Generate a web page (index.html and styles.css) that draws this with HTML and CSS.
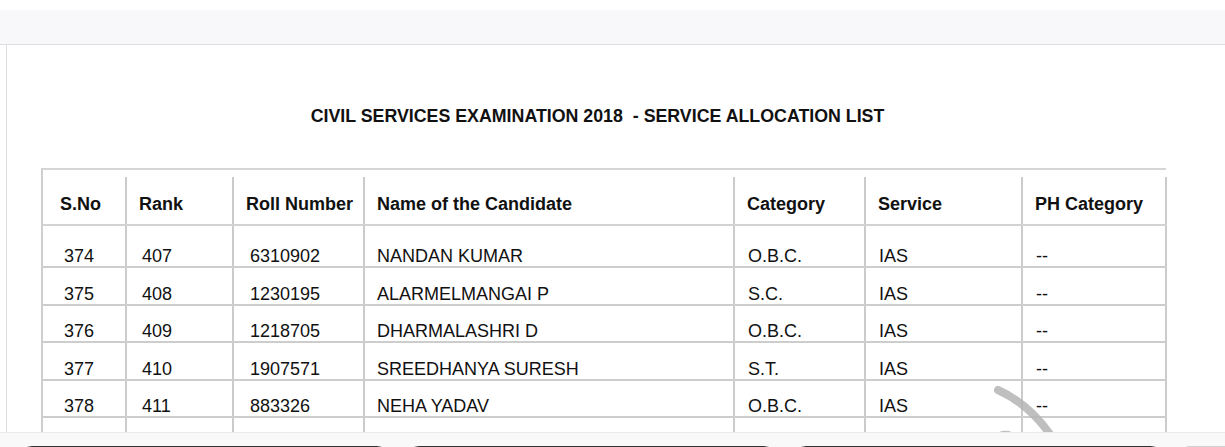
FILE: index.html
```html
<!DOCTYPE html>
<html>
<head>
<meta charset="utf-8">
<link rel="stylesheet" href="styles.css">
</head>
<body>
<div class="topgap"></div>
<div class="band"></div>
<div class="frame">
  <h1 class="title">CIVIL SERVICES EXAMINATION 2018&nbsp; - SERVICE ALLOCATION LIST</h1>
  <div class="tablewrap">
    <table class="list">
      <colgroup>
        <col class="c-sno"><col class="c-rank"><col class="c-roll"><col class="c-name"><col class="c-cat"><col class="c-svc"><col class="c-ph">
      </colgroup>
      <thead>
        <tr><th>S.No</th><th>Rank</th><th>Roll Number</th><th>Name of the Candidate</th><th>Category</th><th>Service</th><th>PH Category</th></tr>
      </thead>
      <tbody>
        <tr class="first"><td>374</td><td>407</td><td>6310902</td><td>NANDAN KUMAR</td><td>O.B.C.</td><td>IAS</td><td>--</td></tr>
        <tr><td>375</td><td>408</td><td>1230195</td><td>ALARMELMANGAI P</td><td>S.C.</td><td>IAS</td><td>--</td></tr>
        <tr><td>376</td><td>409</td><td>1218705</td><td>DHARMALASHRI D</td><td>O.B.C.</td><td>IAS</td><td>--</td></tr>
        <tr><td>377</td><td>410</td><td>1907571</td><td>SREEDHANYA SURESH</td><td>S.T.</td><td>IAS</td><td>--</td></tr>
        <tr><td>378</td><td>411</td><td>883326</td><td>NEHA YADAV</td><td>O.B.C.</td><td>IAS</td><td>--</td></tr>
        <tr class="last"><td></td><td></td><td></td><td></td><td></td><td></td><td></td></tr>
      </tbody>
    </table>
  </div>
  <svg class="watermark" width="90" height="60" viewBox="0 0 90 60">
    <path d="M12 5 Q 45 20 68 55" fill="none" stroke="#b4b4b4" stroke-width="8" stroke-linecap="round" opacity="0.85"/>
    <path d="M8 58 Q 14 48 22 50" fill="none" stroke="#b4b4b4" stroke-width="8" stroke-linecap="round" opacity="0.85"/>
  </svg>
</div>
<div class="footer">
  <div class="card"></div>
  <div class="card"></div>
  <div class="card"></div>
  <div class="card light"></div>
</div>
</body>
</html>
```

FILE: styles.css
```css
html, body {
  margin: 0;
  padding: 0;
  background: #ffffff;
  font-family: "Liberation Sans", Arial, sans-serif;
  color: #111;
  overflow: hidden;
}
.topgap {
  height: 10px;
  background: #ffffff;
}
.band {
  height: 34px;
  background: #f8f8fa;
  border-bottom: 1px solid #dedede;
}
.frame {
  position: relative;
  margin-left: 6px;
  height: 387px;
  border-left: 1px solid #dcdcdc;
  background: #ffffff;
  overflow: hidden;
}
.title {
  margin: 0;
  padding-top: 61px;
  height: 123px;
  box-sizing: border-box;
  text-align: center;
  font-size: 17.8px;
  font-weight: bold;
  line-height: 20px;
  padding-right: 37px;
  color: #111;
}
.tablewrap {
  margin-left: 34px;
  width: 1125px;
  border-top: 2px solid #d6d6d6;
  border-left: 2px solid #cfcfcf;
  padding-top: 7px;
  box-sizing: border-box;
}
.list {
  width: 1123px;
  border-collapse: collapse;
  table-layout: fixed;
  font-size: 18px;
}
.c-sno { width: 83px; }
.c-rank { width: 107px; }
.c-roll { width: 131px; }
.c-name { width: 370px; }
.c-cat { width: 131px; }
.c-svc { width: 157px; }
.c-ph { width: 144px; }
.list th, .list td {
  border-right: 2px solid #cbcbcb;
  padding: 0 0 0 12px;
  text-align: left;
  white-space: nowrap;
  overflow: hidden;
}
.list th {
  font-weight: bold;
  height: 48px;
  vertical-align: middle;
  padding-top: 8px;
  box-sizing: border-box;
  border-bottom: 2px solid #d3d3d3;
}
.list th:first-child { padding-left: 17px; }
.list td {
  font-weight: normal;
  height: 37.5px;
  vertical-align: bottom;
  padding-bottom: 0;
  border-bottom: 2px solid #cdcdcd;
  line-height: 20px;
  box-sizing: border-box;
}
.list td:first-child { padding-left: 21px; }
.list td:nth-child(2) { padding-left: 15px; }
.list td:nth-child(3) { padding-left: 16px; }
.list td:nth-child(4) { padding-left: 12px; }
.list td:nth-child(5), .list td:nth-child(6), .list td:nth-child(7) { padding-left: 13px; }
.list tr.first td { height: 42px; }
.list tr.last td { height: 30px; border-bottom: none; }
.watermark {
  position: absolute;
  left: 979px;
  top: 340px;
}
.footer {
  background: #f9f9f9;
  height: 15px;
  display: flex;
  gap: 18px;
  padding-left: 20px;
  padding-top: 13px;
  box-sizing: border-box;
  overflow: hidden;
  border-top: 1px solid #ececec;
}
.card {
  flex: 0 0 369px;
  height: 40px;
  border: 1.5px solid #333;
  border-radius: 12px;
  box-sizing: border-box;
  background: #fff;
}
.card.light {
  border-color: #d0d0d0;
  border-radius: 6px;
  margin-left: 2px;
}
```
